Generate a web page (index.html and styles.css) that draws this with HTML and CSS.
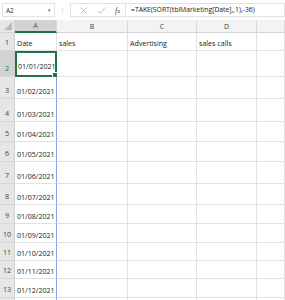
FILE: index.html
```html
<!DOCTYPE html>
<html>
<head>
<meta charset="utf-8">
<link rel="stylesheet" href="styles.css">
</head>
<body>
<div class="app">
  <div class="fbar">
    <div class="namebox"><span class="nb-text">A2</span><span class="caret">&#9662;</span></div>
    <div class="dots">&#8942;</div>
    <div class="fxbox">
      <svg class="ico" width="9" height="9" viewBox="0 0 9 9"><path d="M1.5 1.5 L7.5 7.5 M7.5 1.5 L1.5 7.5" stroke="#b8b8b8" stroke-width="0.9" fill="none"/></svg>
      <svg class="ico" width="9" height="9" viewBox="0 0 9 9"><path d="M1 5 L3.5 7.5 L8 1.5" stroke="#b8b8b8" stroke-width="0.9" fill="none"/></svg>
      <span class="fx"><i>f</i><span class="x">x</span></span>
    </div>
    <div class="formula">=TAKE(SORT(tblMarketing[Date],,1),-36)</div>
  </div>
  <div class="sheet">
    <div class="corner"><svg width="8" height="8" viewBox="0 0 8 8"><path d="M8 0 L8 8 L0 8 Z" fill="#b9b9b9"/></svg></div>
    <div class="ch ch-sel">A</div>
    <div class="ch">B</div>
    <div class="ch">C</div>
    <div class="ch">D</div>
    <div class="ch ch-last"></div>

    <div class="rh">1</div><div class="c ca">Date</div><div class="c">sales</div><div class="c">Advertising</div><div class="c">sales calls</div><div class="c"></div>
    <div class="rh rh-sel">2</div><div class="c ca sel">01/01/2021<span class="handle"></span></div><div class="c"></div><div class="c"></div><div class="c"></div><div class="c"></div>
    <div class="rh">3</div><div class="c ca spill">01/02/2021</div><div class="c"></div><div class="c"></div><div class="c"></div><div class="c"></div>
    <div class="rh">4</div><div class="c ca spill">01/03/2021</div><div class="c"></div><div class="c"></div><div class="c"></div><div class="c"></div>
    <div class="rh">5</div><div class="c ca spill">01/04/2021</div><div class="c"></div><div class="c"></div><div class="c"></div><div class="c"></div>
    <div class="rh">6</div><div class="c ca spill">01/05/2021</div><div class="c"></div><div class="c"></div><div class="c"></div><div class="c"></div>
    <div class="rh">7</div><div class="c ca spill">01/06/2021</div><div class="c"></div><div class="c"></div><div class="c"></div><div class="c"></div>
    <div class="rh">8</div><div class="c ca spill">01/07/2021</div><div class="c"></div><div class="c"></div><div class="c"></div><div class="c"></div>
    <div class="rh">9</div><div class="c ca spill">01/08/2021</div><div class="c"></div><div class="c"></div><div class="c"></div><div class="c"></div>
    <div class="rh">10</div><div class="c ca spill">01/09/2021</div><div class="c"></div><div class="c"></div><div class="c"></div><div class="c"></div>
    <div class="rh">11</div><div class="c ca spill">01/10/2021</div><div class="c"></div><div class="c"></div><div class="c"></div><div class="c"></div>
    <div class="rh">12</div><div class="c ca spill">01/11/2021</div><div class="c"></div><div class="c"></div><div class="c"></div><div class="c"></div>
    <div class="rh">13</div><div class="c ca spill">01/12/2021</div><div class="c"></div><div class="c"></div><div class="c"></div><div class="c"></div>
    <div class="rh"></div><div class="c ca spill"></div><div class="c"></div><div class="c"></div><div class="c"></div><div class="c"></div>
  </div>
</div>
</body>
</html>
```

FILE: styles.css
```css
html, body {
  margin: 0;
  padding: 0;
  background: #ffffff;
  overflow: hidden;
}
.app {
  width: 285px;
  height: 300px;
  overflow: hidden;
  font-family: "Open Sans", "Noto Sans", sans-serif;
  color: #222;
  background: #fff;
}
.fbar {
  height: 20px;
  display: flex;
  align-items: center;
  background: #ffffff;
  box-sizing: border-box;
  padding: 0 0 0 2px;
}
.namebox {
  width: 53px;
  height: 14px;
  box-sizing: border-box;
  border: 1px solid #e1e1e1;
  display: flex;
  align-items: center;
  justify-content: space-between;
  padding: 0 3px 0 3px;
  font-size: 6.5px;
  color: #333;
}
.caret {
  font-size: 5px;
  color: #666;
}
.dots {
  width: 15px;
  text-align: center;
  font-size: 7px;
  color: #bbb;
}
.fxbox {
  width: 55px;
  height: 14px;
  box-sizing: border-box;
  border: 1px solid #e1e1e1;
  border-right: none;
  display: flex;
  align-items: center;
  gap: 9px;
  padding-left: 8px;
}
.ico { display: block; }
.fx {
  font-family: "Liberation Serif", serif;
  font-size: 8px;
  color: #444;
}
.fx .x { font-size: 6px; }
.formula {
  flex: 1;
  height: 14px;
  box-sizing: border-box;
  border: 1px solid #e1e1e1;
  font-size: 6.8px;
  line-height: 12px;
  padding-left: 5px;
  color: #222;
  white-space: nowrap;
  overflow: hidden;
}
.sheet {
  display: grid;
  grid-template-columns: 15px 42px 71px 69px 60px 28px;
  grid-template-rows: 13px 18px 26px 22px 23px 20px 20px 22px 21px 19px 19px 18px 18px 19px 20px;
  font-size: 7.1px;
}
.corner {
  background: #e6e6e6;
  border-right: 1px solid #d4d4d4;
  border-bottom: 1px solid #d4d4d4;
  box-sizing: border-box;
  display: flex;
  align-items: flex-end;
  justify-content: flex-end;
  padding: 0 2px 2px 0;
}
.ch {
  background: #f3f3f3;
  border-right: 1px solid #dadada;
  border-bottom: 1px solid #d4d4d4;
  box-sizing: border-box;
  display: flex;
  align-items: center;
  justify-content: center;
  color: #444;
  font-size: 7px;
}
.ch-sel {
  background: #d2d2d2;
  color: #217346;
  border-bottom: 2px solid #217346;
}
.rh {
  background: #e6e6e6;
  border-right: 1px solid #d0d0d0;
  border-bottom: 1px solid #d8d8d8;
  box-sizing: border-box;
  display: flex;
  align-items: flex-end;
  justify-content: center;
  padding-bottom: 3px;
  color: #444;
  font-size: 7.2px;
}
.rh-sel {
  background: #d2d2d2;
  color: #217346;
}
.c {
  border-right: 1px solid #e1e1e1;
  border-bottom: 1px solid #e1e1e1;
  box-sizing: border-box;
  display: flex;
  align-items: flex-end;
  padding: 0 0 3px 2px;
  white-space: nowrap;
  overflow: visible;
  position: relative;
  line-height: 1;
}
.spill {
  border-right: 1px solid #7ea6e8;
}
.sel {
  border: 2px solid #217346;
  padding-left: 1px;
  padding-bottom: 5px;
}
.handle {
  position: absolute;
  right: -3px;
  bottom: -3px;
  width: 4px;
  height: 4px;
  background: #217346;
  border: 1px solid #fff;
}
```
